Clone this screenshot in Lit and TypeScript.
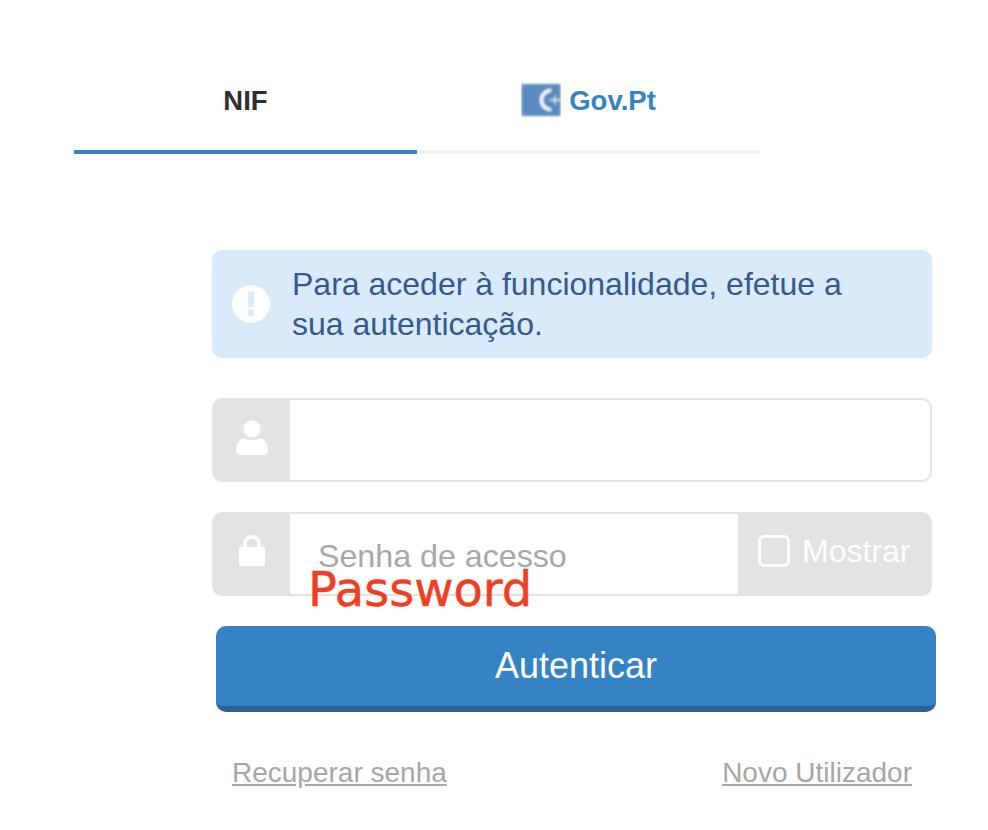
import { LitElement, html, css } from "lit";
import { customElement } from "lit/decorators.js";

@customElement("app-root")
export class AppRoot extends LitElement {
    render() {
        return html`<main class="page">
            <nav class="tabs">
                <a class="tab active">NIF</a>
                <a class="tab">
                    <svg class="gov-logo" width="40" height="36" viewBox="0 0 40 36">
                        <defs>
                            <filter id="soft" x="-10%" y="-10%" width="120%" height="120%">
                                <feGaussianBlur stdDeviation="0.9" />
                            </filter>
                        </defs>
                        <g filter="url(#soft)">
                            <rect x="0.5" y="2" width="39" height="32" fill="#5c8cbf" />
                            <path d="M30 8C23 9.500 20.500 13.500 20.500 18C20.500 22.500 23 26.500 30 28" fill="none" stroke="#f2f6fa" stroke-width="3.600" />
                            <path d="M29 18H39M34 13.500V22.500" fill="none" stroke="#dfe9f3" stroke-width="1.500" />
                        </g>
                    </svg>
                    <span>Gov.Pt</span>
                </a>
            </nav>

            <section class="form">
                <div class="alert">
                    <svg class="alert-icon" width="38" height="38" viewBox="0 0 38 38">
                        <circle cx="19" cy="19" r="19" fill="#fff" />
                        <path d="M15.500 6.500H22.500L21.500 22H16.500Z" fill="#d9eafa" />
                        <rect x="16" y="25" width="6" height="6" fill="#d9eafa" />
                    </svg>
                    <p>Para aceder à funcionalidade, efetue a sua autenticação.</p>
                </div>

                <div class="field">
                    <span class="addon">
                        <svg width="32" height="36" viewBox="0 0 32 36">
                            <circle cx="16" cy="9" r="8.500" fill="#fff" />
                            <path d="M7 18C10 19.500 12 20 16 20C20 20 22 19.500 25 18C29 20 32 24 32 30C32 33 30 35 28 35H4C2 35 0 33 0 30C0 24 3 20 7 18Z" fill="#fff" />
                        </svg>
                    </span>
                    <div class="value"></div>
                </div>

                <div class="field password">
                    <span class="addon">
                        <svg width="26" height="32" viewBox="0 0 26 32">
                            <path d="M6 14V9.500C6 5.500 9 3 13 3C17 3 20 5.500 20 9.500V14" fill="none" stroke="#fff" stroke-width="4" />
                            <rect x="0" y="13" width="26" height="19" rx="2" fill="#fff" />
                        </svg>
                    </span>
                    <div class="value placeholder">Senha de acesso</div>
                    <label class="show"><span class="check"></span>Mostrar</label>
                    <span class="annotation">Password</span>
                </div>

                <button class="submit">Autenticar</button>

                <div class="links">
                    <a>Recuperar senha</a>
                    <a>Novo Utilizador</a>
                </div>
            </section>
        </main>`;
    }

    static styles = css`
        :host {
            display: block;
            height: 830px;
            overflow: hidden;
            background: #fff;
            font-family: "Liberation Sans", Arial, sans-serif;
        }

        * {
            box-sizing: border-box;
        }

        .page {
            padding-top: 70px;
        }

        .tabs {
            display: flex;
            width: 686px;
            margin-left: 74px;
        }

        .tab {
            flex: 1;
            height: 84px;
            padding-bottom: 18px;
            display: flex;
            align-items: center;
            justify-content: center;
            gap: 8px;
            border-bottom: 4px solid #f0f1f3;
            font-size: 27.5px;
            font-weight: 700;
            color: #3583c5;
        }

        .tab.active {
            border-bottom-color: #3583c5;
            color: #2e2e2e;
        }

        .gov-logo {
            display: block;
            margin-top: -2px;
        }

        .form {
            width: 720px;
            margin: 96px 0 0 212px;
        }

        .alert {
            height: 108px;
            display: flex;
            align-items: center;
            gap: 22px;
            padding: 0 80px 0 20px;
            border-radius: 10px;
            background: #d9eafa;
        }

        .alert-icon {
            flex: none;
        }

        .alert p {
            margin: 0;
            font-size: 32px;
            line-height: 40px;
            color: #36598f;
        }

        .field {
            position: relative;
            height: 84px;
            margin-top: 40px;
            display: flex;
            border: 2px solid #e3e3e3;
            border-radius: 10px;
            background: #e3e3e3;
        }

        .password {
            margin-top: 30px;
        }

        .addon {
            flex: none;
            width: 76px;
            display: flex;
            align-items: center;
            justify-content: center;
            padding-bottom: 4px;
        }

        .password .addon {
            padding-bottom: 8px;
        }

        .value {
            flex: 1;
            background: #fff;
            border-radius: 0 8px 8px 0;
        }

        .password .value {
            border-radius: 0;
            padding: 24px 0 0 28px;
        }

        .placeholder {
            font-size: 32.2px;
            line-height: 36px;
            color: #a8a8a8;
        }

        .show {
            flex: none;
            width: 192px;
            display: flex;
            align-items: center;
            gap: 12px;
            padding: 0 0 6px 20px;
            font-size: 32px;
            color: #fff;
        }

        .check {
            flex: none;
            width: 32px;
            height: 32px;
            border: 3px solid #fff;
            border-radius: 6px;
        }

        .annotation {
            position: absolute;
            left: 94px;
            top: 48px;
            font-family: "DejaVu Sans", sans-serif;
            font-size: 48px;
            line-height: 54px;
            color: #ef3e23;
            -webkit-text-stroke: 0.5px #ef3e23;
        }

        .submit {
            display: block;
            width: 720px;
            height: 86px;
            margin: 30px 0 0 4px;
            padding: 0;
            border: 0;
            border-bottom: 6px solid #2a6496;
            border-radius: 10px;
            background: #3583c5;
            font-family: inherit;
            font-size: 36px;
            color: #fff;
        }

        .links {
            display: flex;
            justify-content: space-between;
            padding: 0 20px;
            margin-top: 45px;
            font-size: 28px;
            color: #a6a6a6;
        }

        .links a {
            text-decoration: underline;
        }
    `;
}
